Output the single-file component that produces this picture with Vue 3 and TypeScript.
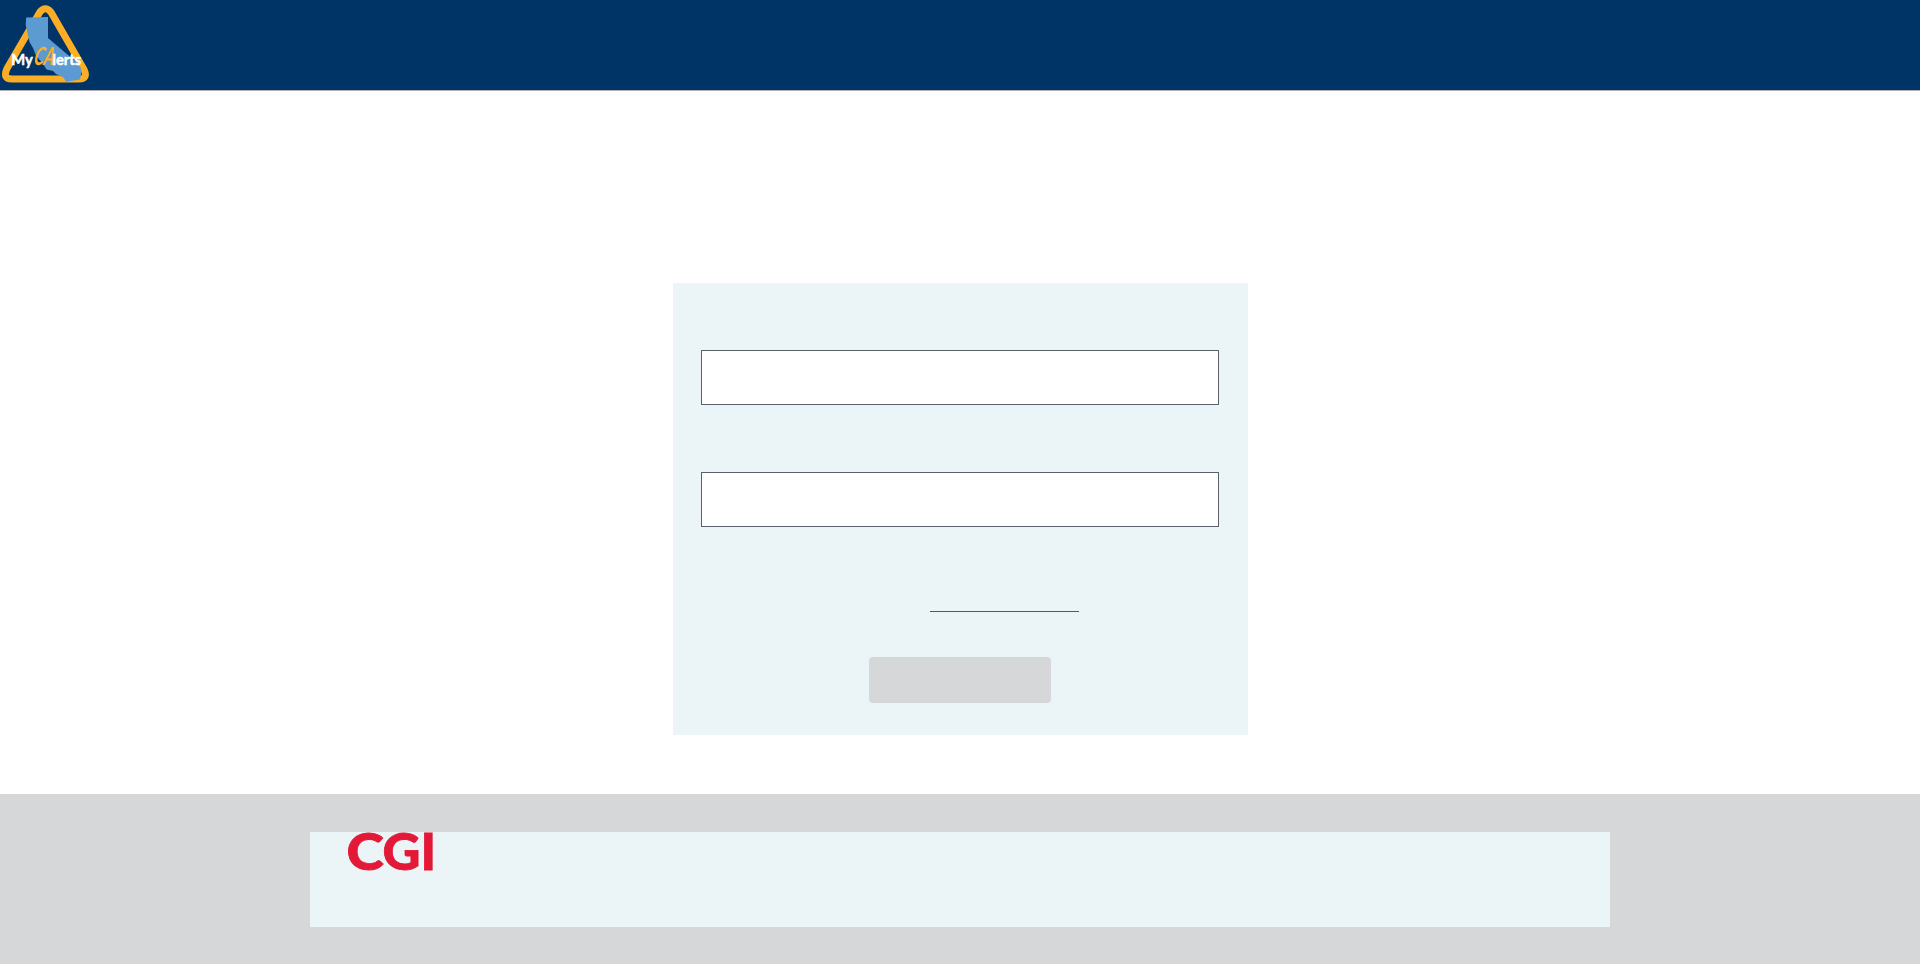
<script setup lang="ts">
import { reactive } from 'vue'

const form = reactive({ email: '', password: '' })
</script>

<template>
  <div class="page">
    <header class="header">
      <svg class="logo" viewBox="0 0 90 90" role="img" aria-label="MyCAlerts">
        <path
          d="M39.6 12.5 L7 68.5 Q2.2 79 12 79 H79 Q88.4 79 84 69.5 L51.2 12.5 Q45.4 5 39.6 12.5Z"
          fill="none" stroke="#fbad26" stroke-width="7" stroke-linejoin="round"
        />
        <path
          d="M26.2 17.6 L48 17 L48 38 L65 52.5 L76 61.5 L80.8 68 L81.5 72 L80 79.5 L66 81.8 L63.5 77.5 L56 74 L53 71 L46.5 69.5 L43.5 64.5 L36 55.5 L33 48 L29.5 42 L27.5 33 L25.7 25Z"
          fill="#5b9bd1"
        />
        <g class="logo-word">
          <text x="11.3" y="65" textLength="21.5" lengthAdjust="spacingAndGlyphs">My</text>
          <text x="52.3" y="65" textLength="29" lengthAdjust="spacingAndGlyphs">lerts</text>
        </g>
        <text class="logo-script" transform="translate(33 64.5) skewX(-12)" textLength="20" lengthAdjust="spacingAndGlyphs">CA</text>
      </svg>
    </header>

    <main class="main">
      <form class="card" @submit.prevent>
        <input v-model="form.email" class="field" type="email" aria-label="Email">
        <input v-model="form.password" class="field" type="password" aria-label="Password">
        <a class="link" href="#" aria-label="Reset password"></a>
        <button class="submit" type="submit" aria-label="Sign in" disabled></button>
      </form>
    </main>

    <footer class="footer">
      <div class="footer-panel">
        <svg class="cgi" viewBox="0 0 88 42" role="img" aria-label="CGI">
          <text x="-1.4" y="38.3" textLength="37.3" lengthAdjust="spacingAndGlyphs">C</text>
          <text x="34.4" y="38.3" textLength="38" lengthAdjust="spacingAndGlyphs">G</text>
          <text x="72.5" y="38.3" textLength="15.6" lengthAdjust="spacingAndGlyphs">I</text>
        </svg>
      </div>
    </footer>
  </div>
</template>

<style>
body {
  margin: 0;
}
</style>

<style scoped>
.page {
  display: flex;
  flex-direction: column;
  height: 964px;
  background: #fff;
  font-family: "Open Sans", sans-serif;
}

.header {
  box-sizing: border-box;
  height: 91px;
  border-bottom: 1px solid #aeb0b5;
  background: #003366;
}

.logo {
  display: block;
  width: 90px;
  height: 90px;
}

.logo-word {
  font: 700 16px Lato, sans-serif;
  fill: #fff;
  stroke: #fff;
  stroke-width: 0.5px;
}

.logo-script {
  font: italic 700 25px Lato, sans-serif;
  fill: #fbad26;
}

.main {
  flex: 1;
  padding-top: 192px;
}

.card {
  box-sizing: border-box;
  display: flex;
  flex-direction: column;
  width: 575px;
  height: 452px;
  margin-left: 673px;
  padding: 67px 29px 0 28px;
  background: #ebf4f7;
}

.field {
  box-sizing: border-box;
  width: 518px;
  height: 55px;
  margin: 0 0 67px;
  padding: 8px;
  border: 1px solid #5b616b;
  border-radius: 0;
  background: #fff;
  font-size: 17px;
}

.link {
  width: 149px;
  height: 1px;
  margin: 17px 0 45px 229px;
  background: #0071bc;
}

.submit {
  width: 182px;
  height: 46px;
  margin-left: 168px;
  padding: 0;
  border: 0;
  border-radius: 4px;
  background: #d6d7d9;
}

.footer {
  box-sizing: border-box;
  height: 170px;
  padding-top: 38px;
  background: #d6d7d9;
}

.footer-panel {
  box-sizing: border-box;
  width: 1300px;
  height: 95px;
  margin: 0 auto;
  padding-left: 38px;
  background: #ebf4f7;
}

.cgi {
  display: block;
  width: 88px;
  height: 42px;
  overflow: visible;
  font: 900 52.2px Lato, sans-serif;
  fill: #e31937;
  stroke: #e31937;
  stroke-width: 0.8px;
}
</style>
